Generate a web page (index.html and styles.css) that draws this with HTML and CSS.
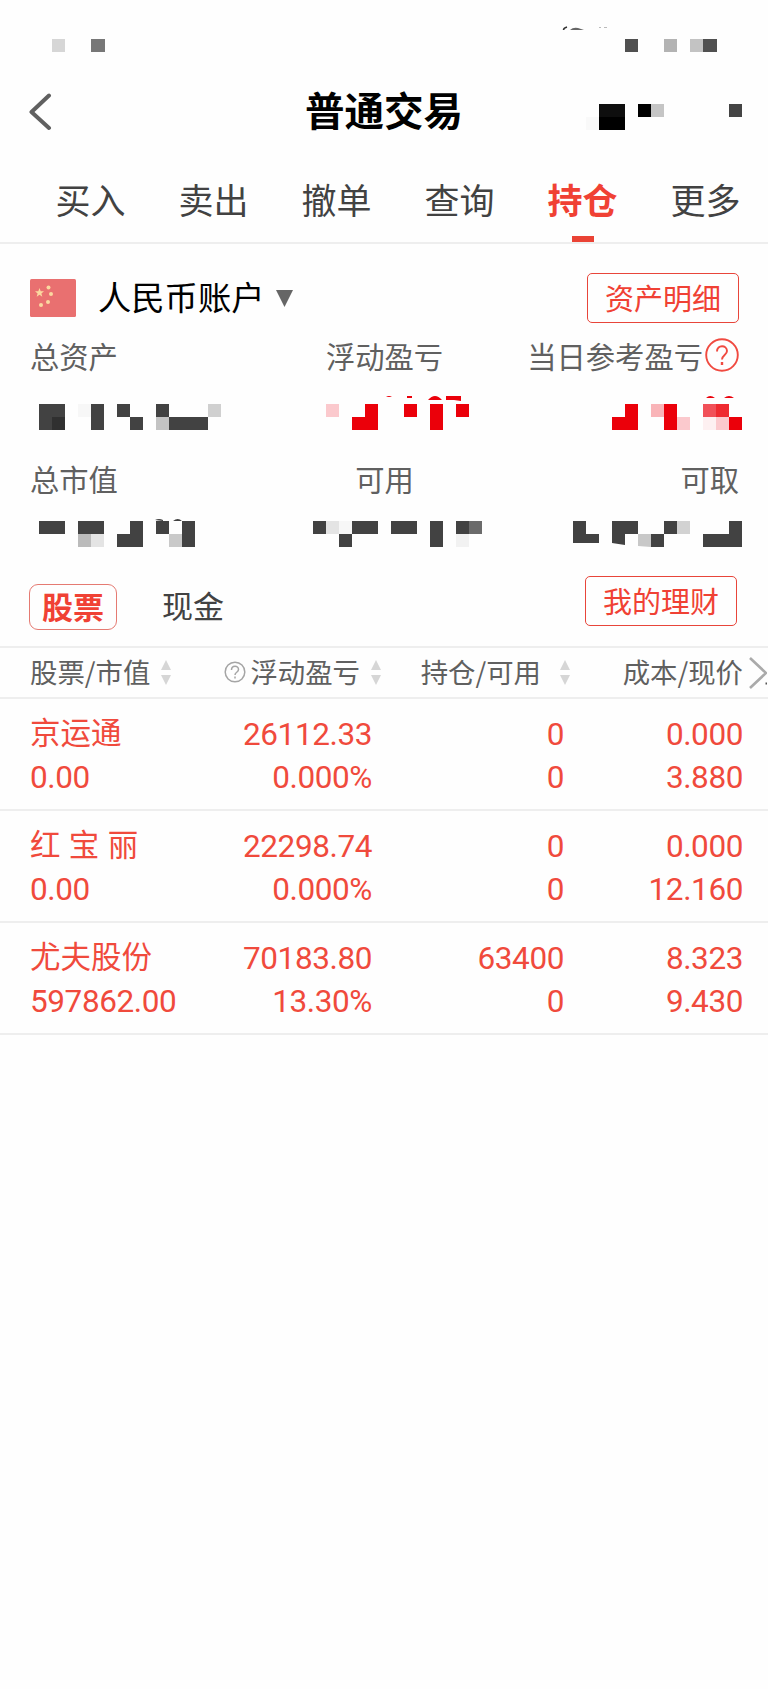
FILE: index.html
```html
<!DOCTYPE html>
<html lang="zh-CN">
<head>
  <meta charset="UTF-8">
  <title>普通交易</title>
  <link rel="stylesheet" href="styles.css">
</head>
<body>
  <svg class="status-bar" width="768" height="68" viewBox="0 0 768 68">
    <path d="M52 39h13v13h-13z" fill="#d6d6d6"/>
    <path d="M91 39h14v13h-14z" fill="#777"/>
    <path d="M563.5 30q0-2 3.500-3" stroke="#333" stroke-width="1.500" fill="none"/>
    <path d="M570 30q3-3 8-2l6 2z" fill="#666"/>
    <path d="M599 27.500h2M604 27.500h3" stroke="#bbb"/>
    <path d="M625 39h13v13h-13zM703 39h14v13h-14z" fill="#505050"/>
    <path d="M664 39h13v13h-13z" fill="#b3b3b3"/>
    <path d="M690 39h13v13h-13z" fill="#c3c3c3"/>
  </svg>

  <header class="title-bar">
    <svg class="back" width="24" height="38" viewBox="0 0 24 38">
      <path d="M20 2.500L2.500 19L20 35" fill="none" stroke="#606060" stroke-width="4" stroke-linecap="round" stroke-linejoin="round"/>
    </svg>
    <h1>普通交易</h1>
    <svg class="tools" width="182" height="88" viewBox="586 68 182 88">
      <path d="M586 117h13v13h-13z" fill="#f9f9f9"/>
      <path d="M599 104h26v26h-26zM638 104h13v13h-13z" fill="#000"/>
      <path d="M599 104h26v13h-26z" fill="#0e0e0e"/>
      <path d="M651 104h13v13h-13z" fill="#c5c5c5"/>
      <path d="M729 104h13v13h-13z" fill="#444"/>
    </svg>
  </header>

  <nav class="tabs">
    <a>买入</a>
    <a>卖出</a>
    <a>撤单</a>
    <a>查询</a>
    <a class="active">持仓</a>
    <a>更多</a>
  </nav>

  <section class="account">
    <svg width="46" height="38" viewBox="0 0 46 38">
      <rect width="46" height="38" rx="1.500" fill="#e97070"/>
      <g fill="#fbd9a0">
        <path d="M9.500 9l1.200 3.200 3.300.1-2.600 2.100.9 3.300-2.800-1.900-2.800 1.900.9-3.300L5 12.300l3.300-.1z"/>
        <circle cx="18.500" cy="8.500" r="2"/>
        <circle cx="21" cy="15" r="2"/>
        <circle cx="18" cy="23" r="2"/>
        <circle cx="11" cy="26" r="2"/>
      </g>
    </svg>
    <span class="account-name">人民币账户</span>
    <svg class="caret" width="17" height="17" viewBox="0 0 17 17"><path d="M0 0h17L8.500 17z" fill="#666"/></svg>
    <button class="outline-btn">资产明细</button>
  </section>

  <section class="summary">
    <div class="labels">
      <span>总资产</span>
      <span>浮动盈亏</span>
      <span>当日参考盈亏<svg class="help" width="34" height="34" viewBox="0 0 34 34" fill="none" stroke="#f04a40" stroke-width="1.900"><circle cx="17" cy="17" r="15.800"/><path d="M12 13.500c0-7 10-7 10-.5 0 4-5 4-5 8.500"/><path d="M17 24v3" stroke-width="2.400"/></svg></span>
    </div>
    <svg class="masked" width="768" height="77" viewBox="0 380 768 77">
      <g fill="#424242">
        <path d="M39 404h26v26h-26zM91 404h13v26h-13zM117 404h13v13h-13zM130 417h13v13h-13zM156 404h13v13h-13zM169 417h39v13h-39z"/>
        <path d="M52 417h13v13h-13z" fill="#303030"/>
        <path d="M78 404h13v13h-13z" fill="#f7f7f7"/>
        <path d="M156 417h13v13h-13z" fill="#c3c3c3"/>
        <path d="M208 404h13v13h-13z" fill="#d0d0d0"/>
      </g>
      <g fill="#eb000a">
        <path d="M378 404v26h-26v-13h13v-13zM404 404h13v13h-13zM430 404h13v26h-13zM456 404h13v13h-13z"/>
        <path d="M446 396h15v5l-7-1h-8zM428 400q7-8 14 0zM407 396h5v2h-5zM386 397q3-2 6 0z"/>
        <path d="M326 404h13v13h-13z" fill="#fbc9cd"/>
        <path d="M638 404v26h-26v-13h13v-13zM664 404h13v26h-13zM729 417h13v13h-13z"/>
        <path d="M706 398q4-4 9 0zM724 398q5-4 10 0z"/>
        <path d="M651 404h13v13h-13z" fill="#f9b4b8"/>
        <path d="M677 417h13v13h-13zM716 417h13v13h-13z" fill="#fbc9cd"/>
        <path d="M703 404h13v13h-13z" fill="#f15058"/>
        <path d="M716 404h13v13h-13z" fill="#ef2a30"/>
        <path d="M703 417h13v13h-13z" fill="#fdf0f1"/>
      </g>
    </svg>
    <div class="labels">
      <span>总市值</span>
      <span>可用</span>
      <span>可取</span>
    </div>
    <svg class="masked" width="768" height="70" viewBox="0 503 768 70">
      <g fill="#424242">
        <path d="M39 521h26v13h-26zM78 521h26v13h-26zM143 521v26h-26v-13h13v-13zM156 521h13v13h-13zM182 521h13v26h-13z"/>
        <path d="M155 520q4-2 8 0v1zM173 521q5-4 9 0z"/>
        <path d="M78 534h13v13h-13z" fill="#bbb"/>
        <path d="M91 534h13v13h-13z" fill="#e4e4e4"/>
        <path d="M169 534h13v13h-13z" fill="#c9c9c9"/>
        <path d="M313 521h13v13h-13zM339 534h13v13h-13zM352 521h26v13h-26zM391 521h26v13h-26zM430 521h13v26h-13zM456 521h13v13h-13z"/>
        <path d="M326 521h13v13h-13z" fill="#e4e4e4"/>
        <path d="M339 521h13v13h-13z" fill="#f7f7f7"/>
        <path d="M469 521h13v13h-13z" fill="#6b6b6b"/>
        <path d="M456 534h13v13h-13z" fill="#f2f2f2"/>
        <path d="M573 521h13v13h13v9h-26zM612 521h26v13h-13v11l-13-2zM651 534h13v13h-13zM664 521h13v13h-13zM742 521v26h-39v-13h26v-13z"/>
        <path d="M638 534h13v13l-13-1z" fill="#c8c8c8"/>
        <path d="M677 521h13v13h-13z" fill="#d2d2d2"/>
      </g>
    </svg>
  </section>

  <section class="kinds">
    <span class="kind active">股票</span>
    <span class="kind">现金</span>
    <button class="outline-btn">我的理财</button>
  </section>

  <section class="positions">
    <div class="thead">
      <div>股票/市值<svg class="sort" width="10" height="25" viewBox="0 0 10 25"><path d="M5 0l5 10H0zM5 25l5-10H0z"/></svg></div>
      <div><svg class="hint" width="22" height="22" viewBox="0 0 22 22" fill="none" stroke="#a5a5a5" stroke-width="1.500"><circle cx="11" cy="11" r="9.800"/><path d="M7.500 9c0-5 7-5 7-.5 0 3-3.500 2.500-3.500 5.500M11 15.500v2"/></svg>浮动盈亏<svg class="sort" width="10" height="25" viewBox="0 0 10 25"><path d="M5 0l5 10H0zM5 25l5-10H0z"/></svg></div>
      <div>持仓/可用<svg class="sort wide" width="10" height="25" viewBox="0 0 10 25"><path d="M5 0l5 10H0zM5 25l5-10H0z"/></svg></div>
      <div>成本/现价</div>
      <svg class="next" width="18" height="32" viewBox="0 0 18 32"><path d="M1 1l16 15L1 31" fill="none" stroke="#aaa" stroke-width="2.600"/><path d="M16.500 25.500h1.500v2h-1.500z" fill="#555"/></svg>
    </div>
    <div class="row">
      <div><b>京运通</b><span>0.00</span></div>
      <div><span>26112.33</span><span>0.000%</span></div>
      <div><span>0</span><span>0</span></div>
      <div><span>0.000</span><span>3.880</span></div>
    </div>
    <div class="row">
      <div><b>红 宝 丽</b><span>0.00</span></div>
      <div><span>22298.74</span><span>0.000%</span></div>
      <div><span>0</span><span>0</span></div>
      <div><span>0.000</span><span>12.160</span></div>
    </div>
    <div class="row">
      <div><b>尤夫股份</b><span>597862.00</span></div>
      <div><span>70183.80</span><span>13.30%</span></div>
      <div><span>63400</span><span>0</span></div>
      <div><span>8.323</span><span>9.430</span></div>
    </div>
  </section>
</body>
</html>
```
FILE: styles.css
```css
* {
  box-sizing: border-box;
}
body {
  margin: 0;
  width: 768px;
  min-height: 1689px;
  background: #fefefe;
  color: #424242;
  font-family: "Noto Sans CJK SC", sans-serif;
  overflow-x: hidden;
}
svg {
  display: block;
  flex: none;
}
.title-bar {
  display: grid;
  grid-template-columns: 1fr auto 1fr;
  align-items: center;
  height: 88px;
}
.title-bar h1 {
  margin: 0;
  padding-bottom: 6px;
  font-size: 39.500px;
  line-height: 82px;
  font-weight: 700;
  color: #000;
}
.back {
  margin-left: 29px;
}
.tools {
  justify-self: end;
}
.tabs {
  display: grid;
  grid-template-columns: repeat(6, 123px);
  height: 88px;
  padding-left: 29px;
  border-bottom: 2px solid #eee;
}
.tabs a {
  display: flex;
  flex-direction: column;
  align-items: center;
  height: 86px;
  font-size: 35px;
  line-height: 86px;
}
.tabs .active {
  color: #f04134;
  font-weight: 700;
}
.tabs .active::after {
  content: "";
  flex: none;
  width: 22px;
  height: 6px;
  margin-top: -6px;
  background: #ea4335;
}
.account {
  display: flex;
  align-items: center;
  height: 90px;
  padding: 23px 29px 5px 30px;
}
.account-name {
  margin-left: 22px;
  padding-bottom: 4px;
  font-size: 33.300px;
  line-height: 46px;
  color: #000;
}
.caret {
  margin-left: 12px;
}
.outline-btn {
  margin-left: auto;
  width: 152px;
  height: 50px;
  padding: 0 0 2px;
  border: 1.500px solid #e8453a;
  border-radius: 5px;
  background: none;
  color: #f04134;
  font: 29px/44px "Noto Sans CJK SC", sans-serif;
}
.labels {
  display: grid;
  grid-template-columns: 1fr 1fr 1fr;
  height: 46px;
  padding: 0 29px 0 30px;
  font-size: 29.300px;
  line-height: 42px;
  color: #606060;
}
.labels span {
  display: flex;
  white-space: nowrap;
}
.labels span:nth-child(2) {
  justify-content: center;
}
.labels span:nth-child(3) {
  justify-content: flex-end;
}
.help {
  margin: 4px 0 0 2px;
}
.kinds {
  display: flex;
  align-items: center;
  height: 73px;
  padding: 0 31px 0 29px;
}
.kind {
  width: 88px;
  height: 46px;
  margin-top: -6px;
  font-size: 31px;
  line-height: 42px;
  text-align: center;
}
.kind + .kind {
  margin-left: 32px;
}
.kind.active {
  border: 1px solid #e57a72;
  border-radius: 9px;
  color: #f04134;
  font-weight: 700;
}
.kinds .outline-btn {
  margin-top: -18px;
}
.thead {
  display: grid;
  grid-template-columns: 170px 181px 189px 173px 24px;
  align-items: center;
  height: 53px;
  padding-left: 30px;
  border-top: 2px solid #eee;
  border-bottom: 2px solid #eee;
  font-size: 27.400px;
  line-height: 45px;
  color: #606060;
}
.thead div {
  display: flex;
  align-items: center;
  justify-content: flex-end;
  height: 49px;
  padding-bottom: 3px;
  white-space: nowrap;
}
.thead div:first-child {
  justify-content: flex-start;
}
.sort {
  margin: 2px 0 0 11px;
  fill: #d6d6d6;
}
.sort.wide {
  margin-left: 19px;
}
.hint {
  margin: 2px 4px 0 0;
}
.next {
  margin-left: 6px;
}
.row {
  display: grid;
  grid-template-columns: 170px 172px 192px 179px;
  height: 112px;
  padding: 14px 0 0 30px;
  border-bottom: 2px solid #eee;
  color: #f04a3c;
  font-size: 31.500px;
  line-height: 43px;
}
.row div {
  display: flex;
  flex-direction: column;
  align-items: flex-end;
  white-space: nowrap;
  font-family: Roboto, "Noto Sans CJK SC", sans-serif;
  letter-spacing: -0.400px;
}
.row div:first-child {
  align-items: flex-start;
}
.row b {
  height: 43px;
  font: 30.500px/37px "Noto Sans CJK SC", sans-serif;
  letter-spacing: 0;
  word-spacing: 1.500px;
}
```
